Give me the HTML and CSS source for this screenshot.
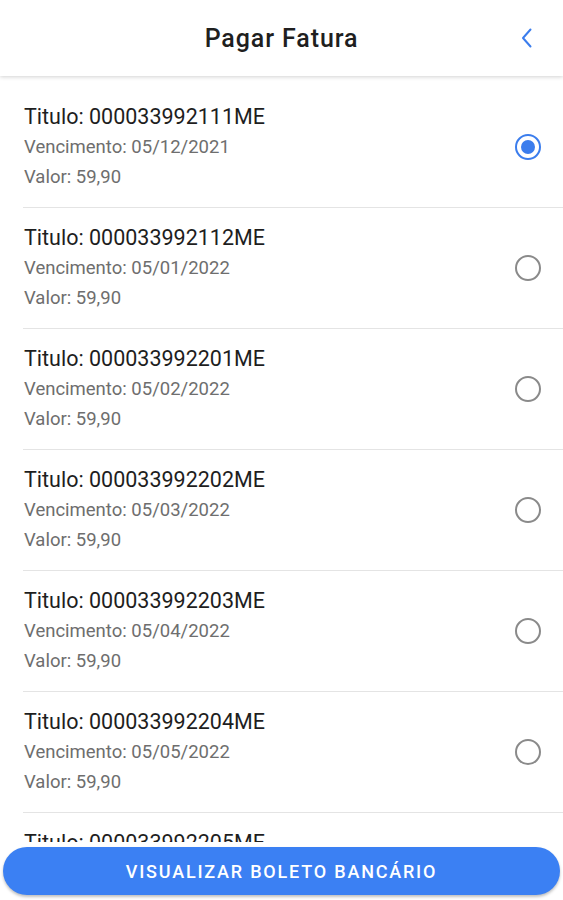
FILE: index.html
```html
<!DOCTYPE html>
<html>
<head>
    <title>Pagar Fatura</title>
    <link rel="stylesheet" href="styles.css">
</head>
<body>
    <div class="screen">
        <header class="top-bar">
            <h1>Pagar Fatura</h1>
            <button class="back" aria-label="Voltar">
                <svg width="24" height="24" viewBox="0 0 24 24" fill="none" stroke="currentColor" stroke-width="2" stroke-linecap="round" stroke-linejoin="round">
                    <path d="M15.5 3.5L8 12l7.5 8.5"></path>
                </svg>
            </button>
        </header>

        <div class="list">
            <label class="item">
                <div class="info">
                    <div class="titulo">Titulo: 000033992111ME</div>
                    <div class="sub">Vencimento: 05/12/2021</div>
                    <div class="sub">Valor: 59,90</div>
                </div>
                <span class="radio checked"></span>
            </label>
            <label class="item">
                <div class="info">
                    <div class="titulo">Titulo: 000033992112ME</div>
                    <div class="sub">Vencimento: 05/01/2022</div>
                    <div class="sub">Valor: 59,90</div>
                </div>
                <span class="radio"></span>
            </label>
            <label class="item">
                <div class="info">
                    <div class="titulo">Titulo: 000033992201ME</div>
                    <div class="sub">Vencimento: 05/02/2022</div>
                    <div class="sub">Valor: 59,90</div>
                </div>
                <span class="radio"></span>
            </label>
            <label class="item">
                <div class="info">
                    <div class="titulo">Titulo: 000033992202ME</div>
                    <div class="sub">Vencimento: 05/03/2022</div>
                    <div class="sub">Valor: 59,90</div>
                </div>
                <span class="radio"></span>
            </label>
            <label class="item">
                <div class="info">
                    <div class="titulo">Titulo: 000033992203ME</div>
                    <div class="sub">Vencimento: 05/04/2022</div>
                    <div class="sub">Valor: 59,90</div>
                </div>
                <span class="radio"></span>
            </label>
            <label class="item">
                <div class="info">
                    <div class="titulo">Titulo: 000033992204ME</div>
                    <div class="sub">Vencimento: 05/05/2022</div>
                    <div class="sub">Valor: 59,90</div>
                </div>
                <span class="radio"></span>
            </label>
            <label class="item">
                <div class="info">
                    <div class="titulo">Titulo: 000033992205ME</div>
                    <div class="sub">Vencimento: 05/06/2022</div>
                    <div class="sub">Valor: 59,90</div>
                </div>
                <span class="radio"></span>
            </label>
        </div>

        <div class="footer">
            <button class="primary">Visualizar Boleto Bancário</button>
        </div>
    </div>
</body>
</html>
```

FILE: styles.css
```css
body {
    font-family: Roboto, 'Noto Sans', sans-serif;
    margin: 0;
    padding: 0;
    background-color: #fff;
    color: #212121;
    height: 100vh;
    overflow: hidden;
}
.screen {
    height: 100vh;
    display: flex;
    flex-direction: column;
}
.top-bar {
    height: 76px;
    flex-shrink: 0;
    display: flex;
    align-items: center;
    justify-content: center;
    background-color: #fff;
    box-shadow: 0 1px 4px rgba(0, 0, 0, 0.18);
    position: relative;
    z-index: 2;
}
.top-bar h1 {
    margin: 0;
    font-size: 25px;
    font-weight: 500;
    color: #1f1f1f;
    letter-spacing: 0.9px;
}
.back {
    position: absolute;
    right: 24px;
    top: 26px;
    background: none;
    border: none;
    padding: 0;
    color: #3b7ded;
    display: flex;
    cursor: pointer;
}
.list {
    flex: 1;
    overflow: hidden;
    padding-top: 11px;
}
.item {
    display: flex;
    align-items: center;
    margin-left: 23px;
    padding: 15px 22px 15px 0;
    border-bottom: 1px solid #e4e4e4;
    cursor: pointer;
}
.info {
    flex: 1;
    padding-left: 1px;
}
.titulo {
    font-size: 21.5px;
    line-height: 30px;
    color: #1e1e1e;
}
.sub {
    font-size: 18.5px;
    line-height: 30px;
    color: #6e6e6e;
}
.radio {
    width: 22px;
    height: 22px;
    border: 2px solid #8a8a8a;
    border-radius: 50%;
    box-sizing: content-box;
    display: flex;
    align-items: center;
    justify-content: center;
}
.radio.checked {
    border-color: #3b7ded;
}
.radio.checked::after {
    content: "";
    width: 14px;
    height: 14px;
    border-radius: 50%;
    background-color: #3b7ded;
}
.footer {
    height: 58px;
    flex-shrink: 0;
    background-color: #fff;
    padding: 5px 3px 0;
    box-sizing: border-box;
    position: relative;
    z-index: 2;
}
.primary {
    width: 100%;
    height: 48px;
    border: none;
    border-radius: 24px;
    background-color: #3b80f3;
    color: #fff;
    font-family: Roboto, 'Noto Sans', sans-serif;
    font-size: 18px;
    font-weight: 500;
    letter-spacing: 1.8px;
    text-transform: uppercase;
    box-shadow: 0 2px 3px rgba(0, 0, 0, 0.25);
    cursor: pointer;
}
```
